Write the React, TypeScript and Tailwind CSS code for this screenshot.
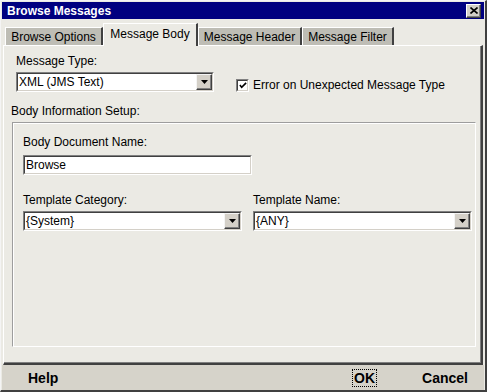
import React from 'react';

// Classic Java/Swing style "Browse Messages" dialog

function DropArrow() {
    return (
        <div className="w-[16px] h-full bg-[#d4d0c8] border-t border-l border-t-[#f4f4f4] border-l-[#f4f4f4] border-r border-b border-r-[#404040] border-b-[#404040] shadow-[inset_-1px_-1px_0_#808080] flex items-center justify-center">
            <svg width="7" height="4" viewBox="0 0 7 4">
                <path d="M0 0h7L3.5 4z" fill="#000" />
            </svg>
        </div>
    );
}

function Sunken({ className, children }: { className: string; children: React.ReactNode }) {
    return (
        <div className={`${className} border-t border-l border-t-[#808080] border-l-[#808080] border-r border-b border-r-white border-b-white`}>
            <div className="w-full h-full bg-white border-t border-l border-t-[#404040] border-l-[#404040] border-r border-b border-r-[#d4d0c8] border-b-[#d4d0c8] flex items-center">
                {children}
            </div>
        </div>
    );
}

function Select({ value, className }: { value: string; className: string }) {
    return (
        <Sunken className={className}>
            <span className="flex-1 pl-[1px] whitespace-nowrap">{value}</span>
            <DropArrow />
        </Sunken>
    );
}

const tabs = [
    { label: 'Browse Options', width: 'w-[98px]', active: false },
    { label: 'Message Body', width: 'w-[95px]', active: true },
    { label: 'Message Header', width: 'w-[104px]', active: false },
    { label: 'Message Filter', width: 'w-[92px]', active: false },
];

export default function App() {
    return (
        <div className="w-[487px] h-[392px] bg-[#ebeae4] border-t border-l border-t-[#f4f4f4] border-l-[#f4f4f4] border-r-2 border-b-2 border-r-[#404040] border-b-[#404040] pt-[1px] pl-[1px] pr-[1px] flex flex-col font-['Liberation_Sans',Arial,sans-serif] text-[12px] leading-[14px] text-black">
            {/* Title bar */}
            <div className="h-[17px] bg-[#000080] flex items-center justify-between pl-[5px] pr-[3px]">
                <span className="text-white font-bold text-[12px]">Browse Messages</span>
                <div className="w-[15px] h-[14px] bg-[#d4d0c8] border-t border-l border-t-white border-l-white border-r border-b border-r-[#404040] border-b-[#404040] shadow-[inset_-1px_-1px_0_#808080] flex items-center justify-center">
                    <svg width="8" height="7" viewBox="0 0 8 7">
                        <path d="M0.5 0.5L7.5 6.5M7.5 0.5L0.5 6.5" stroke="#000" strokeWidth="1.6" />
                    </svg>
                </div>
            </div>

            {/* Tabs */}
            <div className="h-[26px] flex items-end pl-[3px]">
                {tabs.map((t) =>
                    t.active ? (
                        <div
                            key={t.label}
                            className={`${t.width} h-[23px] -mb-[1px] relative z-10 bg-[#ebeae4] border-t border-l border-t-white border-l-white border-r-2 border-r-[#404040] flex items-start justify-center pt-[3px] text-[12px]`}
                        >
                            {t.label}
                        </div>
                    ) : (
                        <div
                            key={t.label}
                            className={`${t.width} h-[18px] bg-[#bebdb5] border-t border-l border-t-white border-l-white border-r-2 border-r-[#404040] flex items-center justify-center text-[12px]`}
                        >
                            {t.label}
                        </div>
                    )
                )}
            </div>

            {/* Tab panel */}
            <div className="flex-1 mx-[1px] bg-[#ebeae4] border-t border-l border-t-white border-l-white border-r-2 border-b-2 border-r-[#404040] border-b-[#404040] shadow-[inset_-1px_-1px_0_#808080] flex flex-col pl-[7px] pt-[8px]">
                <div className="ml-[5px] flex flex-col">
                    <span>Message Type:</span>
                    <div className="mt-[4px] flex items-start">
                        <Select value="XML (JMS Text)" className="w-[198px] h-[20px]" />
                        <div className="ml-[22px] mt-[6px] flex items-center">
                            <Sunken className="w-[13px] h-[13px]">
                                <svg width="9" height="9" viewBox="0 0 9 9" className="ml-[1px]">
                                    <path d="M1 4l2 2.5L8 1.5" stroke="#000" strokeWidth="1.8" fill="none" />
                                </svg>
                            </Sunken>
                            <span className="ml-[4px]">Error on Unexpected Message Type</span>
                        </div>
                    </div>
                </div>

                <span className="mt-[12px]">Body Information Setup:</span>

                {/* Group box */}
                <div className="mt-[4px] ml-[1px] w-[464px] h-[225px] border-t border-l border-t-[#9d9d9d] border-l-[#9d9d9d] border-r border-b border-r-white border-b-white shadow-[inset_1px_1px_0_#fff] flex flex-col pl-[10px] pt-[12px]">
                    <span>Body Document Name:</span>
                    <Sunken className="mt-[6px] w-[229px] h-[20px]">
                        <span className="pl-[1px]">Browse</span>
                    </Sunken>

                    <div className="mt-[18px] flex gap-[11px]">
                        <div className="w-[219px] flex flex-col">
                            <span>Template Category:</span>
                            <Select value="{System}" className="mt-[4px] w-[219px] h-[20px]" />
                        </div>
                        <div className="w-[219px] flex flex-col">
                            <span>Template Name:</span>
                            <Select value="{ANY}" className="mt-[4px] w-[219px] h-[20px]" />
                        </div>
                    </div>
                </div>
            </div>

            {/* Button bar */}
            <div className="h-[25px] bg-[#d6d3ca] flex items-center pl-[26px] pr-[16px] text-[14px] font-bold leading-[16px]">
                <span>Help</span>
                <div className="flex-1" />
                <span className="border border-dotted border-black px-[1px]">OK</span>
                <span className="ml-[45px]">Cancel</span>
            </div>
        </div>
    );
}
